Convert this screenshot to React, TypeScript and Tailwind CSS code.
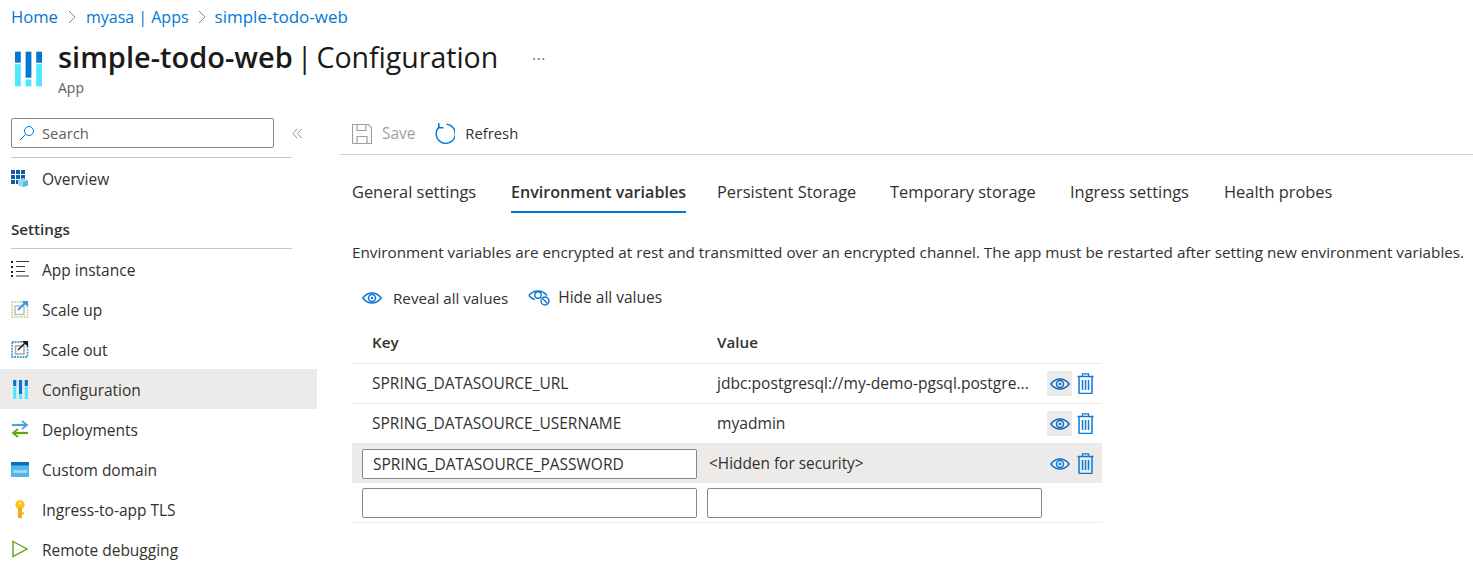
import { ReactNode } from "react";

const font = { fontFamily: "'Open Sans', 'Noto Sans', sans-serif" };

function ConfigIcon({ className }: { className: string }) {
  return (
    <svg viewBox="0 0 28 36" className={className}>
      <rect x="0" y="0" width="6" height="11.500" fill="#0078d4" />
      <rect x="0" y="13" width="6" height="23" fill="#50e6ff" />
      <rect x="11" y="0" width="6" height="27" fill="#0078d4" />
      <rect x="11" y="29" width="6" height="7" fill="#50e6ff" />
      <rect x="22" y="0" width="6" height="11.500" fill="#0078d4" />
      <rect x="22" y="13" width="6" height="23" fill="#50e6ff" />
    </svg>
  );
}

function Chevron() {
  return (
    <svg viewBox="0 0 8 14" className="w-[8px] h-[14px]">
      <path d="M1 1l6 6-6 6" fill="none" stroke="#8a8886" strokeWidth="1" />
    </svg>
  );
}

function OverviewIcon() {
  return (
    <svg viewBox="0 0 18 18" className="w-[18px] h-[18px]">
      <path d="M0 1h4v4H0zM5 1h4v4H5zM10 1h4v4h-4zM0 6h4v4H0zM5 6h4v4H5zM10 6h4v4h-4zM0 11h4v4H0zM5 11h4v4H5z" fill="#0f5da8" />
      <path d="M12 9l5 2.500v5L12 18l-5-1.500v-5z" fill="#9fd8ee" />
      <path d="M12 13l5-1.500v5L12 18z" fill="#5fb5dc" />
    </svg>
  );
}

function ListIcon() {
  return (
    <svg viewBox="0 0 18 18" className="w-[18px] h-[18px]">
      <path d="M0 1h2v2H0zM0 6h2v2H0zM0 11h2v2H0zM0 15h2v2H0z" fill="#1b1a19" />
      <path d="M5 1.500h13M5 6.500h9M5 11.500h9M5 16h13" stroke="#3b3a39" strokeWidth="1" fill="none" />
    </svg>
  );
}

function ScaleUpIcon() {
  return (
    <svg viewBox="0 0 18 18" className="w-[18px] h-[18px]">
      <rect x="1" y="2" width="15.500" height="15" fill="none" stroke="#a4d27c" strokeWidth="1.500" strokeDasharray="1.500 1" />
      <rect x="4" y="6" width="9" height="8.500" fill="none" stroke="#bdbdbd" strokeWidth="1.500" />
      <path d="M7 10l8-8" stroke="#3999e8" strokeWidth="2" />
      <path d="M10.500 1H17v6z" fill="#3999e8" />
    </svg>
  );
}

function ScaleOutIcon() {
  return (
    <svg viewBox="0 0 18 18" className="w-[18px] h-[18px]">
      <rect x="1" y="2" width="15.500" height="15" fill="none" stroke="#3aa0d8" strokeWidth="1.800" strokeDasharray="1.800 1" />
      <rect x="4.500" y="6" width="8.500" height="8" fill="none" stroke="#a6a6a6" strokeWidth="1.500" />
      <path d="M7 10l8-8" stroke="#1b1a19" strokeWidth="1.600" />
      <path d="M11 1h6v6z" fill="#1b1a19" />
    </svg>
  );
}

function DeployIcon() {
  return (
    <svg viewBox="0 0 18 18" className="w-[18px] h-[18px]">
      <path d="M1 5h14" stroke="#4aa3dc" strokeWidth="2.200" />
      <path d="M11 1l5 4-5 4" stroke="#4aa3dc" strokeWidth="1.800" fill="none" />
      <path d="M17 13H3" stroke="#5ea50e" strokeWidth="2.200" />
      <path d="M7 9l-5 4 5 4" stroke="#5ea50e" strokeWidth="1.800" fill="none" />
    </svg>
  );
}

function DomainIcon() {
  return (
    <svg viewBox="0 0 18 15" className="w-[18px] h-[15px]">
      <rect width="18" height="15" fill="#50b8ec" />
      <rect width="18" height="3.500" fill="#0f6cbd" />
      <text x="9" y="11" textAnchor="middle" fontSize="6" fill="#ffffff">www</text>
    </svg>
  );
}

function KeyIcon() {
  return (
    <svg viewBox="0 0 12 20" className="w-[12px] h-[19px]">
      <circle cx="6" cy="5" r="5" fill="#fcc419" />
      <rect x="4" y="8" width="4" height="11" fill="#f0a818" />
      <path d="M8 13h2v2H8z" fill="#f0a818" />
      <circle cx="6" cy="3.500" r="1.200" fill="#fff3b0" />
    </svg>
  );
}

function PlayIcon() {
  return (
    <svg viewBox="0 0 16 18" className="w-[16px] h-[18px]">
      <path d="M1 1.500L15 9 1 16.500z" fill="none" stroke="#5ea50e" strokeWidth="1.400" />
    </svg>
  );
}

function Eye({ color = "#0f6cbd", className = "w-[20px] h-[12px]" }: { color?: string; className?: string }) {
  return (
    <svg viewBox="0 0 20 12" className={className}>
      <path d="M.8 6C3.500 2.500 6.500 1 10 1s6.500 1.500 9.200 5c-2.700 3.500-5.700 5-9.200 5S3.500 9.500.8 6z" fill="none" stroke={color} strokeWidth="1.500" />
      <circle cx="10" cy="6" r="3.500" fill="none" stroke={color} strokeWidth="1.500" />
      <circle cx="10" cy="6" r="1.300" fill={color} />
    </svg>
  );
}

function EyeOff() {
  return (
    <svg viewBox="0 0 23 16" className="w-[23px] h-[16px]">
      <path d="M.8 5.500C3.500 2.300 6.500 1 10 1s6.500 1.300 9 4.500" fill="none" stroke="#0f78d4" strokeWidth="1.400" />
      <path d="M.8 5.500C2.500 7.700 4.500 9 7 9.600" fill="none" stroke="#0f78d4" strokeWidth="1.400" />
      <circle cx="10" cy="5" r="3.200" fill="none" stroke="#0f78d4" strokeWidth="1.400" />
      <circle cx="17" cy="11" r="4" fill="#fff" stroke="#0f78d4" strokeWidth="1.400" />
      <path d="M14.500 8.500l5 5" stroke="#0f78d4" strokeWidth="1.400" />
    </svg>
  );
}

function Trash() {
  return (
    <svg viewBox="0 0 17 21" className="w-[17px] h-[21px]">
      <path d="M.5 3.500h16M5.500 3V.8h6V3" fill="none" stroke="#0f78d4" strokeWidth="1.300" />
      <path d="M2 4v15.500q0 1 1 1h11q1 0 1-1V4" fill="none" stroke="#0f78d4" strokeWidth="1.500" />
      <path d="M5.500 7v10M8.500 7v10M11.500 7v10" stroke="#0f78d4" strokeWidth="1.500" fill="none" />
    </svg>
  );
}

function NavItem({ icon, label, active }: { icon: ReactNode; label: string; active?: boolean }) {
  return (
    <div className={`flex items-center h-[40px] pl-[11px] ${active ? "bg-[#edebe9]" : ""}`}>
      <div className="w-[18px] flex justify-center">{icon}</div>
      <span className="ml-[13px] pt-[1px] text-[15.5px] leading-[20px] text-[#323130] whitespace-nowrap">{label}</span>
    </div>
  );
}

function Tab({ label, active, className }: { label: string; active?: boolean; className: string }) {
  return (
    <div className={`h-[40px] pt-[7px] text-[#323130] whitespace-nowrap ${active ? "font-semibold text-[16.1px] border-b-2 border-[#0078d4]" : "text-[16.4px]"} ${className}`}>
      {label}
    </div>
  );
}

function RowActions({ hovered }: { hovered?: boolean }) {
  return (
    <div className="flex items-center gap-[5px]">
      <div className={`w-[25px] h-[25px] flex items-center justify-center ${hovered ? "bg-[#edebe9]" : ""}`}>
        <Eye color={hovered ? "#106ebe" : "#0f78d4"} />
      </div>
      <Trash />
    </div>
  );
}

function Row({ name, value }: { name: string; value: string }) {
  return (
    <div className="flex items-center h-[40px] border-b border-[#edebe9] text-[#323130]">
      <div className="w-[365px] pl-[20px] text-[15.5px]">{name}</div>
      <div className="w-[330px] text-[15.6px] whitespace-nowrap">{value}</div>
      <RowActions hovered />
    </div>
  );
}

export default function App() {
  return (
    <div className="w-[1473px] h-[575px] overflow-hidden bg-white text-[#323130]" style={font}>
      <div className="flex items-center h-[34px] pl-[11px] text-[#0078d4]">
        <span className="text-[16.6px]">Home</span>
        <span className="mx-[10px] flex"><Chevron /></span>
        <span className="text-[16px]">myasa | Apps</span>
        <span className="mx-[9px] flex"><Chevron /></span>
        <span className="text-[17px]">simple-todo-web</span>
      </div>

      <div className="flex pl-[15px] h-[70px]">
        <ConfigIcon className="w-[27px] h-[36px] mt-[17px]" />
        <div className="ml-[16px]">
          <div className="flex items-center h-[46px] text-[#1b1a19] whitespace-nowrap">
            <span className="font-semibold text-[29px]">simple-todo-web</span>
            <span className="ml-[4px] text-[28.600px]">|</span>
            <span className="ml-[4px] text-[28.500px]">Configuration</span>
            <span className="ml-[34px] text-[14px] text-[#605e5c] mt-[2px] tracking-[1px]">···</span>
          </div>
          <div className="text-[14px] text-[#605e5c] leading-[20px] -mt-[2px]">App</div>
        </div>
      </div>

      <div className="flex">
        <aside className="w-[317px] shrink-0">
          <div className="flex items-center pl-[11px] h-[30px] mt-[14px]">
            <div className="flex items-center w-[263px] h-[30px] border border-[#8a8886] rounded-[2px] pl-[7px]">
              <svg viewBox="0 0 16 16" className="w-[16px] h-[16px]">
                <circle cx="10" cy="6" r="4.500" fill="none" stroke="#0078d4" strokeWidth="1" />
                <path d="M6.500 9.500L1 15" stroke="#0078d4" strokeWidth="1" />
              </svg>
              <span className="ml-[7px] pt-[1px] text-[14.8px] text-[#605e5c]">Search</span>
            </div>
            <svg viewBox="0 0 12 12" className="w-[11px] h-[11px] ml-[18px]">
              <path d="M5.500 1L1 6l4.500 5M10.500 1L6 6l4.500 5" fill="none" stroke="#8a8886" strokeWidth="1" />
            </svg>
          </div>
          <div className="ml-[11px] w-[281px] border-b border-[#c8c6c4] mt-[9px]" />
          <NavItem icon={<OverviewIcon />} label="Overview" />
          <div className="pl-[11px] mt-[19px] h-[31px] text-[15.2px] font-semibold text-[#323130] leading-[24px]">Settings</div>
          <div className="ml-[11px] w-[281px] border-b border-[#c8c6c4]" />
          <NavItem icon={<ListIcon />} label="App instance" />
          <NavItem icon={<ScaleUpIcon />} label="Scale up" />
          <NavItem icon={<ScaleOutIcon />} label="Scale out" />
          <NavItem icon={<ConfigIcon className="w-[15px] h-[19px]" />} label="Configuration" active />
          <NavItem icon={<DeployIcon />} label="Deployments" />
          <NavItem icon={<DomainIcon />} label="Custom domain" />
          <NavItem icon={<KeyIcon />} label="Ingress-to-app TLS" />
          <NavItem icon={<PlayIcon />} label="Remote debugging" />
        </aside>

        <main className="flex-1 ml-[23px]">
          <div className="flex items-center h-[48px] pt-[6px] pl-[12px] border-b border-[#d2d0ce] mt-[3px]">
            <svg viewBox="0 0 20 20" className="w-[20px] h-[20px]">
              <path d="M.5.500h16l3 3v16H.5zM5 .5v6h9v-6M5 19.500v-7h10v7" fill="none" stroke="#a19f9d" strokeWidth="1.200" />
            </svg>
            <span className="ml-[10px] text-[15.4px] text-[#a19f9d]">Save</span>
            <svg viewBox="0 0 22 22" className="w-[21px] h-[21px] ml-[19px]">
              <path d="M6 3.500A10 10 0 1 0 13 1.300" fill="none" stroke="#0078d4" strokeWidth="1.500" />
              <path d="M5 0v5h5" fill="none" stroke="#0078d4" strokeWidth="1.500" />
            </svg>
            <span className="ml-[10px] text-[14.8px] text-[#323130]">Refresh</span>
          </div>

          <div className="flex pl-[12px] mt-[18px] h-[40px]">
            <Tab label="General settings" className="w-[159px]" />
            <Tab label="Environment variables" active className="w-[175px]" />
            <Tab label="Persistent Storage" className="ml-[31px] w-[173px]" />
            <Tab label="Temporary storage" className="w-[180px]" />
            <Tab label="Ingress settings" className="w-[154px]" />
            <Tab label="Health probes" className="" />
          </div>

          <div className="pl-[12px] mt-[27px] text-[15.270px] text-[#323130] leading-[24px] whitespace-nowrap">
            Environment variables are encrypted at rest and transmitted over an encrypted channel. The app must be restarted after setting new environment variables.
          </div>

          <div className="flex items-center pl-[22px] mt-[22px] h-[24px] text-[#323130]">
            <Eye color="#0f78d4" />
            <span className="ml-[11px] text-[15.2px]">Reveal all values</span>
            <span className="ml-[20px] flex"><EyeOff /></span>
            <span className="ml-[7px] text-[15.5px]">Hide all values</span>
          </div>

          <div className="ml-[12px] w-[750px] mt-[11px]">
            <div className="flex items-center h-[43px] border-b border-[#edebe9] text-[15.2px] font-semibold text-[#323130]">
              <div className="w-[365px] pl-[20px]">Key</div>
              <div>Value</div>
            </div>
            <Row name="SPRING_DATASOURCE_URL" value="jdbc:postgresql://my-demo-pgsql.postgre..." />
            <Row name="SPRING_DATASOURCE_USERNAME" value="myadmin" />
            <div className="flex items-center h-[39px] bg-[#edebe9] text-[#323130]">
              <div className="ml-[10px] w-[335px] h-[30px] bg-white border border-[#8a8886] rounded-[2px] pl-[10px] text-[15.5px] leading-[28px]">SPRING_DATASOURCE_PASSWORD</div>
              <div className="ml-[12px] w-[338px] text-[15.4px]">&lt;Hidden for security&gt;</div>
              <RowActions />
            </div>
            <div className="flex items-center h-[40px] pt-[1px] border-b border-[#edebe9]">
              <div className="ml-[10px] w-[335px] h-[30px] bg-white border border-[#8a8886] rounded-[2px]" />
              <div className="ml-[10px] w-[335px] h-[30px] bg-white border border-[#8a8886] rounded-[2px]" />
            </div>
          </div>
        </main>
      </div>
    </div>
  );
}
